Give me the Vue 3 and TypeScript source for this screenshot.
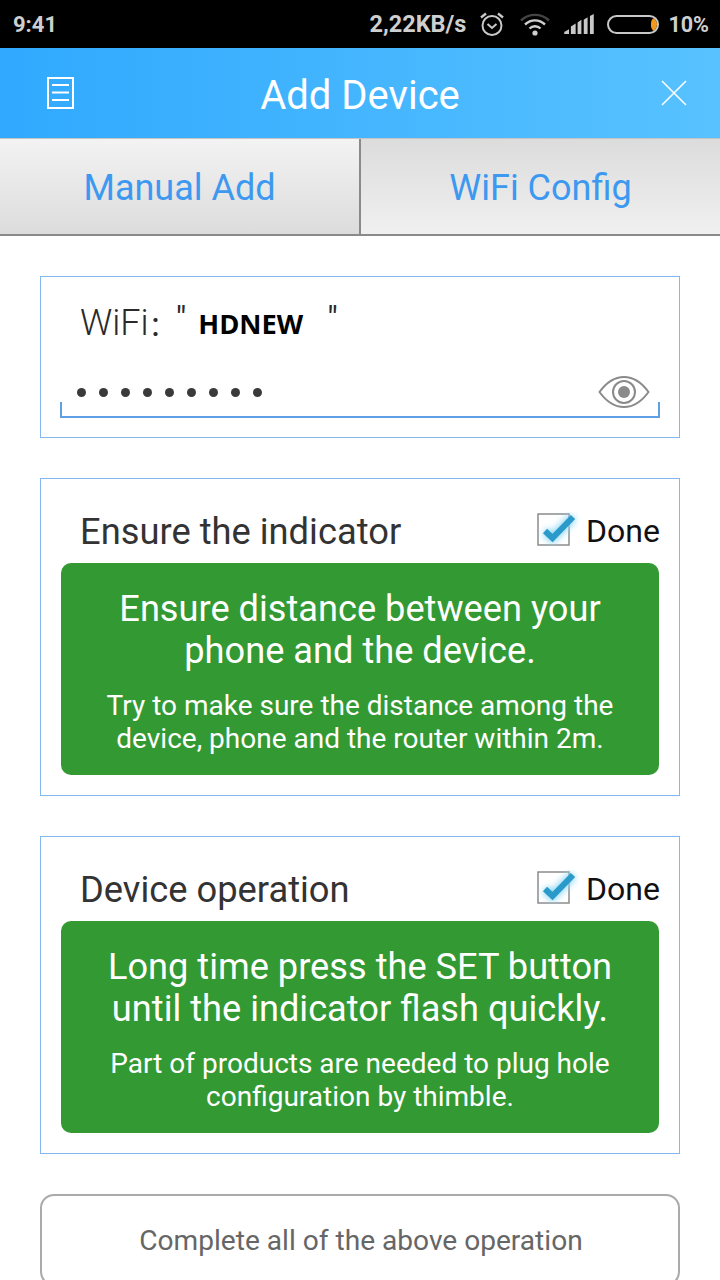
<template>
  <div class="page">
    <!-- status bar -->
    <div class="status">
      <span class="time">9:41</span>
      <div class="status-right">
        <span class="speed">2,22KB/s</span>
        <svg class="ic-alarm" width="26" height="26" viewBox="0 0 26 26" fill="none" stroke="#c8c8c8">
          <circle cx="13" cy="14.5" r="9.5" stroke-width="2" />
          <path d="M8.5 13l4.5 4 4.5-4" stroke-width="2" />
          <path d="M2 6.5L7 2.5M24 6.5L19 2.5" stroke-width="2.4" />
        </svg>
        <svg class="ic-wifi" width="30" height="24" viewBox="0 0 30 24" fill="none">
          <path d="M1 8.5C9 1 21 1 29 8.5" stroke="#444" stroke-width="2.4" />
          <path d="M5 12.5C11 7 19 7 25 12.5" stroke="#d0d0d0" stroke-width="2.4" />
          <path d="M9.5 16.5C12.5 13.5 17.5 13.5 20.5 16.5" stroke="#d0d0d0" stroke-width="2.4" />
          <circle cx="15" cy="21" r="2.6" fill="#d0d0d0" />
        </svg>
        <svg class="ic-signal" width="30" height="20" viewBox="0 0 31 21" fill="#c8c8c8">
          <path d="M0 21v-2l5-3v5zM7 21v-8l5-3v11zM14 21V9l4-3v15zM20.500 21V6l4-2.500V21zM27 21V2l4-2v21z" />
        </svg>
        <div class="battery"><i></i></div>
        <span class="pct">10%</span>
      </div>
    </div>

    <!-- title bar -->
    <header class="bar">
      <svg class="ic-menu" width="27" height="32" viewBox="0 0 27 32" fill="none" stroke="#fff" stroke-width="2">
        <rect x="1" y="1" width="25" height="30" />
        <path d="M5 8h17M5 15.500h17M5 23h17" />
      </svg>
      <h1>Add Device</h1>
      <svg class="ic-close" width="26" height="26" viewBox="0 0 26 26" stroke="#fff" stroke-width="1.6">
        <path d="M1 1l24 24M25 1L1 25" />
      </svg>
    </header>

    <!-- tabs -->
    <nav class="tabs">
      <div class="tab tab-off">Manual Add</div>
      <div class="tab tab-on">WiFi Config</div>
    </nav>

    <main class="body">
      <section class="card wifi">
        <div class="ssid">
          <span class="ssid-label">WiFi</span><span class="colon">：</span><span class="quote">"</span>
          <b>HDNEW</b><span class="quote q2">"</span>
        </div>
        <div class="pwd">
          <div class="dots">
            <i v-for="n in 9" :key="n"></i>
          </div>
          <svg class="ic-eye" width="52" height="34" viewBox="0 0 52 34" fill="none" stroke="#8a8a8a" stroke-width="2">
            <path d="M1.500 17C8 8 16 2 26 2s18 6 24.500 15C44 26 36 32 26 32S8 26 1.500 17z" />
            <circle cx="26" cy="17" r="11" />
            <circle cx="26" cy="17" r="6" fill="#8a8a8a" stroke="none" />
          </svg>
        </div>
      </section>

      <section v-for="s in steps" :key="s.title" class="card step">
        <div class="step-head">
          <span class="step-title">{{ s.title }}</span>
          <div class="done">
            <svg class="ic-check" width="42" height="34" viewBox="0 0 42 34" fill="none">
              <defs>
                <filter id="glow" x="-40%" y="-40%" width="180%" height="180%">
                  <feGaussianBlur stdDeviation="3" />
                </filter>
              </defs>
              <rect x="1" y="2" width="31" height="31" fill="#fff" stroke="#8c8c8c" stroke-width="1.500" />
              <path d="M8 19l7.500 7L36 5" stroke="#8fd8f5" stroke-width="9" filter="url(#glow)" />
              <path d="M8 19l7.500 7L36 5" stroke="#2a9acb" stroke-width="6" />
            </svg>
            <span class="done-text">Done</span>
          </div>
        </div>
        <div class="notice">
          <p class="big">{{ s.big }}</p>
          <p class="small">{{ s.small }}</p>
        </div>
      </section>

      <button class="complete">Complete all of the above operation</button>
    </main>
  </div>
</template>

<script setup lang="ts">
interface Step {
  title: string;
  big: string;
  small: string;
}

const steps: Step[] = [
  {
    title: 'Ensure the indicator',
    big: 'Ensure distance between your phone and the device.',
    small: 'Try to make sure the distance among the device, phone and the router within 2m.',
  },
  {
    title: 'Device operation',
    big: 'Long time press the SET button until the indicator flash quickly.',
    small: 'Part of products are needed to plug hole configuration by thimble.',
  },
];
</script>

<style>
html,
body {
  margin: 0;
  background: #fff;
}
</style>

<style scoped>
.page {
  width: 720px;
  height: 1280px;
  overflow: hidden;
  background: #fff;
  font-family: Roboto, "Liberation Sans", sans-serif;
}

/* status bar */
.status {
  height: 48px;
  background: #000;
  color: #cfcfcf;
  display: flex;
  align-items: center;
  justify-content: space-between;
  padding: 0 11px 0 13px;
  font-size: 22px;
  font-weight: 700;
}
.status-right {
  display: flex;
  align-items: center;
}
.speed {
  font-size: 23.5px;
  margin-right: 13px;
}
.pct {
  font-size: 21.5px;
}
.ic-alarm {
  margin-right: 15px;
}
.ic-wifi {
  margin-right: 14px;
}
.ic-signal {
  margin-right: 13px;
}
.battery {
  width: 52px;
  height: 19px;
  border: 2px solid #c8c8c8;
  border-radius: 10px;
  box-sizing: border-box;
  margin-right: 9px;
  position: relative;
  overflow: hidden;
}
.battery i {
  position: absolute;
  right: 0;
  top: 0;
  bottom: 0;
  width: 6px;
  background: #f39a1e;
  border-radius: 6px 0 0 6px;
}

/* title bar */
.bar {
  height: 90px;
  background: linear-gradient(90deg, #30a9fe, #58c2ff);
  display: grid;
  grid-template-columns: 1fr auto 1fr;
  align-items: center;
  padding: 0 33px 0 47px;
  box-sizing: border-box;
}
.ic-close {
  justify-self: end;
}
.bar h1 {
  margin: 4px 0 0 -14px;
  color: #fff;
  font-size: 40px;
  font-weight: 400;
}

/* tabs */
.tabs {
  height: 98px;
  display: flex;
  border-top: 1px solid #c4c4c4;
  border-bottom: 2px solid #8a8a8a;
  box-sizing: border-box;
}
.tab {
  flex: 1;
  display: flex;
  align-items: center;
  justify-content: center;
  padding-top: 2px;
  color: #3d99f0;
  font-size: 36px;
}
.tab-off {
  background: linear-gradient(#f3f3f3, #dcdcdc);
  border-right: 2px solid #8a8a8a;
}
.tab-on {
  background: linear-gradient(#dcdcdc, #f0f0f0);
}

/* content */
.body {
  padding: 40px 40px 0;
  display: flex;
  flex-direction: column;
  gap: 40px;
}
.card {
  border: 1px solid #85b8ee;
  box-sizing: border-box;
}
.wifi {
  height: 162px;
  padding: 0 19px;
}
.ssid {
  height: 92px;
  padding: 0 0 0 20px;
  box-sizing: border-box;
  display: flex;
  align-items: center;
  color: #2a2a2a;
  font-size: 36px;
  font-weight: 300;
}
.colon {
  font-family: "Noto Sans CJK SC", sans-serif;
  font-size: 27px;
  font-weight: 400;
  margin-top: 2px;
}
.ssid b {
  color: #000;
  font-size: 27.3px;
  font-weight: 700;
  font-family: "Open Sans", sans-serif;
  margin: 0 0 0 12px;
}
.quote {
  font-size: 33px;
  font-weight: 400;
  margin: 0 0 10px 0;
}
.q2 {
  margin-left: 24px;
}
.pwd {
  height: 49px;
  display: flex;
  align-items: center;
  justify-content: space-between;
  padding: 0 8px 0 15px;
  border: solid #5e9fe6;
  border-width: 0 2px 2px;
  border-image: linear-gradient(transparent 70%, #5e9fe6 70%) 1;
  box-sizing: border-box;
}
.ic-eye {
  margin-top: -2px;
}
.dots {
  display: flex;
  gap: 13px;
}
.dots i {
  width: 9px;
  height: 9px;
  border-radius: 50%;
  background: #3a3a3a;
}

.step {
  height: 318px;
  padding: 0 20px;
}
.step-head {
  height: 84px;
  display: flex;
  align-items: center;
  justify-content: space-between;
  padding: 21px 0 0 19px;
  box-sizing: border-box;
}
.step-title {
  font-size: 36.3px;
  color: #333;
}
.done {
  display: flex;
  align-items: center;
  gap: 7px;
  margin-right: -1px;
  font-size: 32px;
  color: #111;
}
.done-text {
  margin-bottom: 2px;
}
.ic-check {
  margin-top: -5px;
}
.notice {
  height: 212px;
  background: #339933;
  border-radius: 10px;
  color: #fff;
  text-align: center;
  padding: 25px 30px 0;
  box-sizing: border-box;
}
.notice p {
  margin: 0;
}
.big {
  font-size: 36.2px;
  line-height: 42px;
}
.small {
  font-size: 28px;
  line-height: 33px;
  margin-top: 17px !important;
}

.complete {
  flex: none;
  height: 92px;
  width: 100%;
  background: #fff;
  border: 2px solid #aaa;
  border-radius: 14px;
  font-family: inherit;
  font-size: 28.1px;
  color: #666;
  padding: 0 0 0 2px;
}
</style>
